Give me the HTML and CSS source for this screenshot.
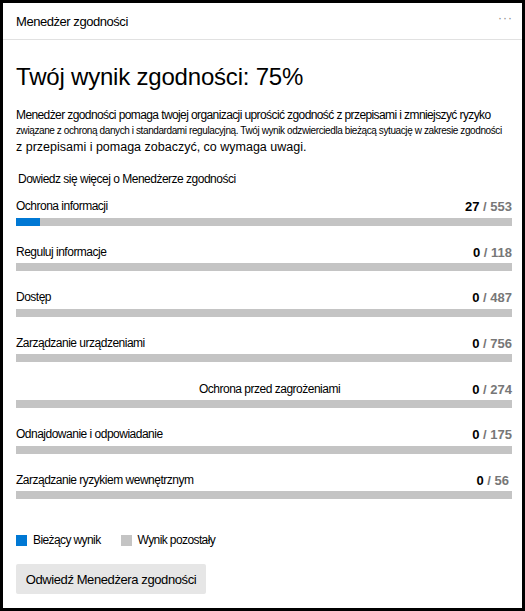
FILE: index.html
```html
<!DOCTYPE html>
<html lang="pl">
<head>
<meta charset="utf-8">
<link rel="stylesheet" href="styles.css">
</head>
<body>
<div class="card">
  <div class="header">
    <span class="header-title">Menedżer zgodności</span>
    <span class="more">···</span>
  </div>
  <div class="content">
    <h1 class="title">Twój wynik zgodności: 75%</h1>
    <p class="desc">
      <span class="l1">Menedżer zgodności pomaga twojej organizacji uprościć zgodność z przepisami i zmniejszyć ryzyko</span>
      <span class="l2">związane z ochroną danych i standardami regulacyjną. Twój wynik odzwierciedla bieżącą sytuację w zakresie zgodności</span>
      <span class="l3">z przepisami i pomaga zobaczyć, co wymaga uwagi.</span>
    </p>
    <div class="learn">Dowiedz się więcej o Menedżerze zgodności</div>
    <div class="rows">
      <div class="row">
        <div class="row-head"><span class="name">Ochrona informacji</span><span class="score"><b>27</b><span class="total"> / 553</span></span></div>
        <div class="bar"><div class="fill" style="width:4.9%"></div></div>
      </div>
      <div class="row">
        <div class="row-head"><span class="name">Reguluj informacje</span><span class="score"><b>0</b><span class="total"> / 118</span></span></div>
        <div class="bar"></div>
      </div>
      <div class="row">
        <div class="row-head"><span class="name">Dostęp</span><span class="score"><b>0</b><span class="total"> / 487</span></span></div>
        <div class="bar"></div>
      </div>
      <div class="row">
        <div class="row-head"><span class="name">Zarządzanie urządzeniami</span><span class="score"><b>0</b><span class="total"> / 756</span></span></div>
        <div class="bar"></div>
      </div>
      <div class="row">
        <div class="row-head"><span class="name indent">Ochrona przed zagrożeniami</span><span class="score"><b>0</b><span class="total"> / 274</span></span></div>
        <div class="bar"></div>
      </div>
      <div class="row">
        <div class="row-head"><span class="name">Odnajdowanie i odpowiadanie</span><span class="score"><b>0</b><span class="total"> / 175</span></span></div>
        <div class="bar"></div>
      </div>
      <div class="row">
        <div class="row-head"><span class="name">Zarządzanie ryzykiem wewnętrznym</span><span class="score inset"><b>0</b><span class="total"> / 56</span></span></div>
        <div class="bar"></div>
      </div>
    </div>
    <div class="legend">
      <span class="key"><span class="sw blue"></span>Bieżący wynik</span>
      <span class="key"><span class="sw gray"></span>Wynik pozostały</span>
    </div>
    <button class="btn">Odwiedź Menedżera zgodności</button>
  </div>
</div>
</body>
</html>
```

FILE: styles.css
```css
* { box-sizing: border-box; }
html, body { margin: 0; padding: 0; background: #fff; }
body { font-family: "Liberation Sans", Arial, sans-serif; color: #000; }
.card {
  width: 525px;
  height: 611px;
  border: 3px solid #000;
  background: #fff;
  display: flex;
  flex-direction: column;
  overflow: hidden;
}
.header {
  flex-shrink: 0;
  height: 37px;
  border-bottom: 1px solid #e1e1e1;
  display: flex;
  align-items: center;
  justify-content: space-between;
  padding: 0 9px 0 13px;
}
.header-title { font-size: 13px; letter-spacing: -0.45px; }
.more { font-size: 12px; color: #8a8a8a; letter-spacing: 1px; margin-top: -6px; }
.content {
  padding: 0 10px 0 13px;
  display: flex;
  flex-direction: column;
}
.title {
  font-size: 24px;
  font-weight: normal;
  margin: 23px 0 0;
  line-height: 28px;
  letter-spacing: -0.2px;
}
.desc { margin: 17px 0 0; }
.desc span { display: block; white-space: nowrap; }
.desc .l1 { font-size: 12px; line-height: 15px; letter-spacing: -0.6px; }
.desc .l2 { font-size: 10px; line-height: 15px; letter-spacing: -0.4px; }
.desc .l3 { font-size: 12.5px; line-height: 18px; }
.learn {
  font-size: 12px;
  line-height: 15px;
  margin: 16px 0 0 2px;
  letter-spacing: -0.5px;
}
.rows {
  margin-top: 12px;
  display: flex;
  flex-direction: column;
  gap: 19.17px;
}
.row-head {
  height: 15px;
  display: flex;
  justify-content: space-between;
  align-items: center;
  font-size: 12px;
  line-height: 15px;
}
.name { letter-spacing: -0.5px; }
.name.indent { margin-left: 183px; }
.score { font-size: 13px; font-weight: bold; }
.score.inset { margin-right: 3px; }
.score .total { color: #777; }
.bar {
  margin-top: 3.5px;
  height: 8px;
  background: #c4c4c4;
}
.fill { height: 100%; background: #0078d4; }
.legend {
  margin-top: 34px;
  display: flex;
  gap: 20px;
  font-size: 12px;
  letter-spacing: -0.6px;
  line-height: 14px;
}
.key { display: flex; align-items: center; gap: 6px; }
.sw { width: 11px; height: 11px; display: inline-block; }
.sw.blue { background: #0078d4; }
.sw.gray { background: #c4c4c4; }
.btn {
  margin-top: 17px;
  align-self: flex-start;
  width: 190px;
  height: 30px;
  border: none;
  background: #e6e6e6;
  border-radius: 2px;
  font-family: "Liberation Sans", Arial, sans-serif;
  font-size: 13px;
  letter-spacing: -0.4px;
  color: #000;
  padding: 0;
}
```
